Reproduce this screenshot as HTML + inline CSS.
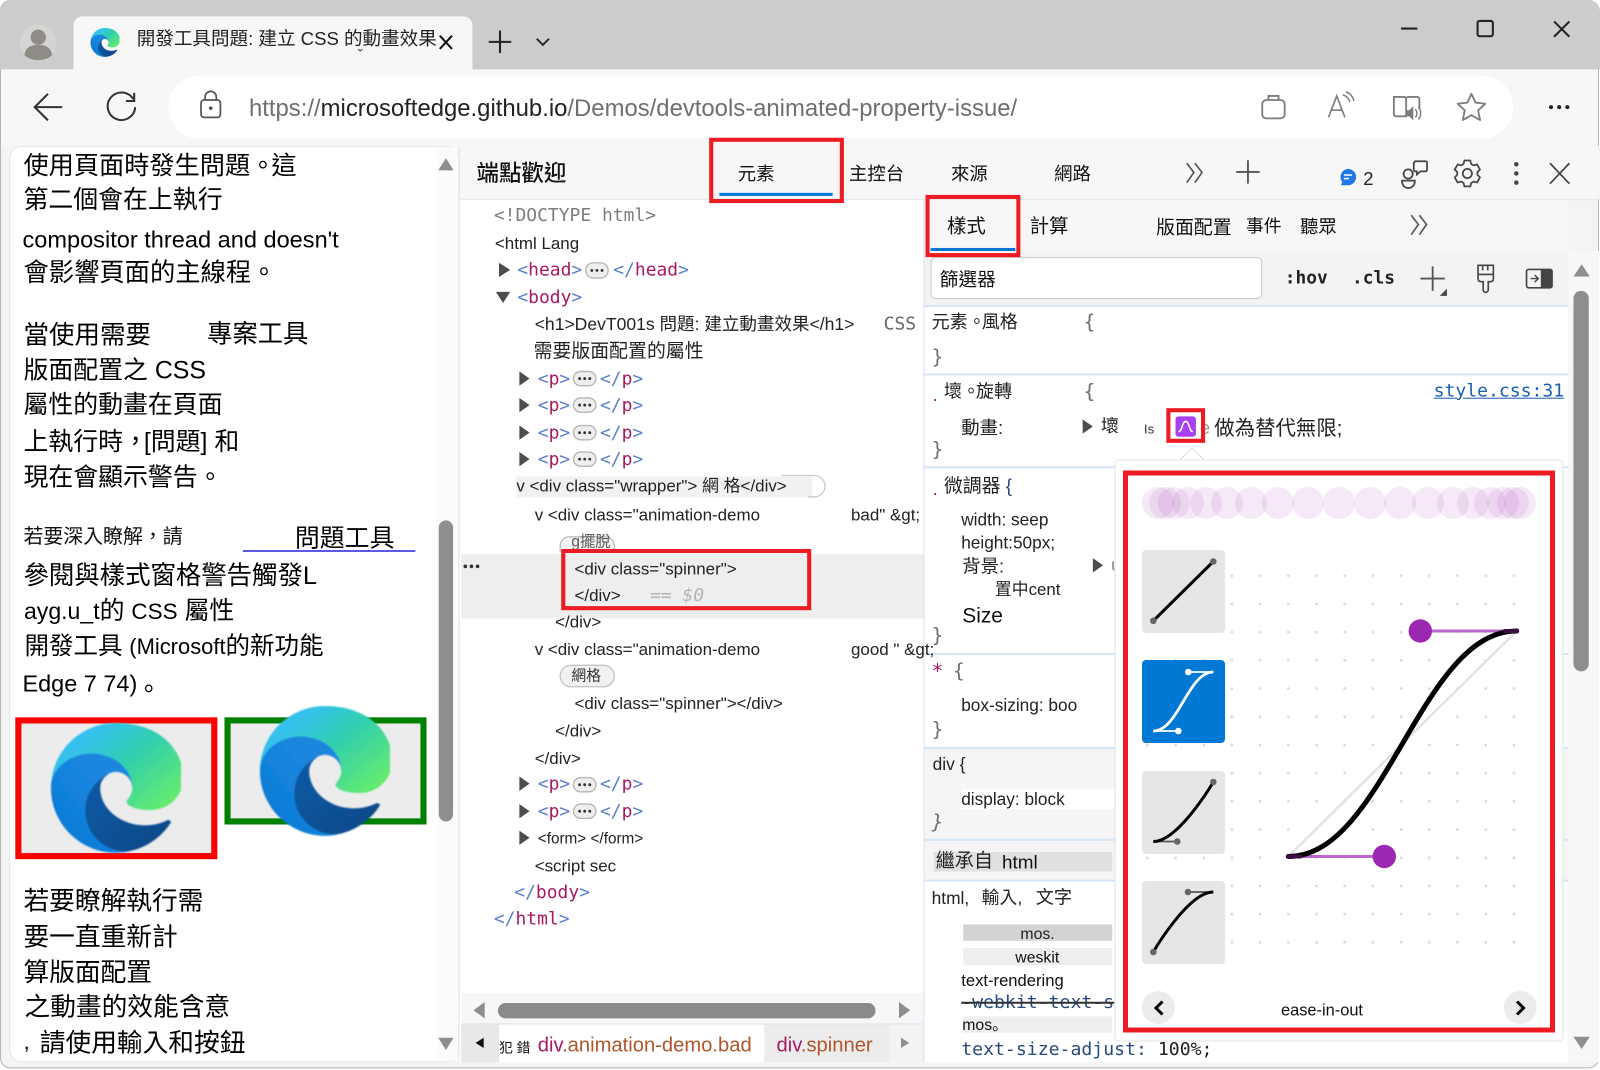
<!DOCTYPE html>
<html lang="zh-Hant">
<head>
<meta charset="utf-8">
<title>開發工具問題</title>
<style>
html,body{margin:0;padding:0;width:1600px;height:1070px;overflow:hidden;background:#fff}
#w{position:absolute;left:0;top:0;width:1568px;height:1049px;transform:scale(1.020408);transform-origin:0 0;font-family:"Liberation Sans","Noto Sans CJK TC",sans-serif;color:#000;overflow:hidden}
.b{position:absolute}
.t{position:absolute;white-space:pre;line-height:1;transform:translateY(calc(-50% + 1.2px));font-size:16.5px;color:#111}
.m{font-family:"DejaVu Sans Mono","Liberation Mono","Noto Sans CJK TC",monospace;font-size:17.6px;transform:translateY(calc(-50% + 1.6px))}
.p{font-size:24.4px;color:#000;transform:translateY(calc(-50% + 2px))}
.r{position:absolute;border:4.6px solid #ed1c24;box-sizing:border-box;z-index:5}
.g{color:#7d7d7d}.tag{color:#a8195f}.br{color:#5a7fd0}
.br2{color:#6d6d6d}
.d{font-size:16.6px;color:#222}
.j{font-family:"Liberation Sans","Noto Sans CJK SC",sans-serif;font-style:normal}
.n{margin-right:-4px}
#o{position:absolute;left:0;top:0;z-index:9}
</style>
</head>
<body>
<div id="w">
<!-- window background -->
<div class="b" style="left:0;top:0;width:1567px;height:1047px;background:#f4f4f4;border:1px solid #b5b5b5;border-radius:10px;box-sizing:border-box"></div>
<div class="b" style="left:0;top:0;width:1568px;height:68px;background:#cccccc;border-radius:11px 11px 0 0"></div>
<div class="b" style="left:72px;top:16px;width:391px;height:53px;background:#f7f7f7;border-radius:9px 9px 0 0"></div>
<div class="b" style="left:1px;top:68px;width:1565px;height:76px;background:#f7f7f7"></div>
<div class="b" style="left:165px;top:74px;width:1318px;height:62px;background:#fff;border-radius:31px"></div>

<!-- page panel -->
<div class="b" style="left:9px;top:143px;width:441px;height:898px;background:#fff;border-radius:12px;border:1px solid #e6e6e6;box-sizing:border-box"></div>
<div class="b" style="left:428px;top:144px;width:20px;height:895px;background:#fbfbfb"></div>
<div class="b" style="left:430px;top:510px;width:14px;height:295px;background:#8e8e8e;border-radius:7px"></div>

<!-- devtools -->
<div class="b" style="left:451px;top:143px;width:1116px;height:52px;background:#f7f7f7;box-shadow:0 1px 2px #ddd"></div>
<div class="b" style="left:451px;top:196px;width:454px;height:845px;background:#fff"></div>
<div class="b" style="left:452px;top:543px;width:453px;height:63px;background:#eeeeee"></div>
<div class="b" style="left:506px;top:467px;width:290px;height:20px;background:#f1f1f1"></div>
<div class="b" style="left:452px;top:973px;width:453px;height:30px;background:#f7f7f7"></div>
<div class="b" style="left:488px;top:983px;width:370px;height:15px;background:#8a8a8a;border-radius:8px"></div>
<div class="b" style="left:452px;top:1003px;width:453px;height:38px;background:#f3f3f3;border-top:1px solid #d6e3f3;box-sizing:border-box"></div>
<div class="b" style="left:452px;top:1004px;width:37px;height:37px;background:#e8e8e8"></div>
<div class="b" style="left:489px;top:1004px;width:260px;height:37px;background:#fff"></div>
<div class="b" style="left:749px;top:1004px;width:123px;height:37px;background:#ececec"></div>

<!-- styles pane -->
<div class="b" style="left:905px;top:196px;width:632px;height:845px;background:#fff;border-left:1px solid #d6e3f3;box-sizing:border-box"></div>
<div class="b" style="left:906px;top:196px;width:631px;height:52px;background:#f7f7f7"></div>
<div class="b" style="left:906px;top:248px;width:631px;height:51px;background:#f3f3f3"></div>
<div class="b" style="left:912px;top:252px;width:325px;height:41px;background:#fff;border:1px solid #c8c8c8;border-radius:5px;box-sizing:border-box"></div>
<div class="b" style="left:1537px;top:246px;width:30px;height:795px;background:#f7f7f7"></div>
<div class="b" style="left:1542px;top:285px;width:15px;height:373px;background:#8e8e8e;border-radius:8px"></div>
<div class="b" style="left:906px;top:299px;width:631px;height:2px;background:#d6e4f7"></div>
<div class="b" style="left:906px;top:366px;width:631px;height:2px;background:#d6e4f7"></div>
<div class="b" style="left:906px;top:457px;width:631px;height:2px;background:#d6e4f7"></div>
<div class="b" style="left:906px;top:640px;width:631px;height:2px;background:#d6e4f7"></div>
<div class="b" style="left:906px;top:732px;width:631px;height:90px;background:#f5f5f5;border-top:2px solid #d6e4f7;box-sizing:border-box"></div>
<div class="b" style="left:942px;top:773px;width:195px;height:20px;background:#fff"></div>
<div class="b" style="left:906px;top:822px;width:631px;height:42px;background:#f5f5f5;border-top:2px solid #d6e4f7;border-bottom:2px solid #d6e4f7;box-sizing:border-box"></div>
<div class="b" style="left:915px;top:835px;width:175px;height:19px;background:#e0e0e0"></div>
<div class="b" style="left:944px;top:906px;width:146px;height:16px;background:#d3d3d3"></div>
<div class="b" style="left:944px;top:929px;width:146px;height:17px;background:#eeeeee"></div>
<div class="b" style="left:944px;top:996px;width:146px;height:16px;background:#eeeeee"></div>

<!-- shapes -->
<svg class="b" style="left:0;top:0" width="1568" height="1049" viewBox="0 0 1568 1049" fill="none">
<!-- avatar -->
<circle cx="37.5" cy="42" r="18" fill="#d4d4d2"/>
<circle cx="37.5" cy="36.5" r="7.5" fill="#8f8c88"/>
<path d="M24 54c1-8 7-10 13.500-10s12.500 2 13.500 10c-3 3-8 5-13.500 5s-10.500-2-13.500-5z" fill="#8f8c88"/>
<!-- tab icons -->
<path d="M431 35l12 13M443 35l-12 13" stroke="#111" stroke-width="2"/>
<path d="M490 30v22M479 41h22" stroke="#222" stroke-width="2"/>
<path d="M526 38l6 6 6-6" stroke="#222" stroke-width="1.800"/>
<path d="M351 48l2 2 2-2" stroke="#444" stroke-width="1"/>
<!-- window controls -->
<path d="M1373 28h16" stroke="#222" stroke-width="2"/>
<rect x="1448" y="20.500" width="15" height="15" rx="2" stroke="#222" stroke-width="2"/>
<path d="M1523 21l15 15M1538 21l-15 15" stroke="#222" stroke-width="2"/>
<!-- toolbar -->
<path d="M61 105H35M47 92l-13 13 13 13" stroke="#333" stroke-width="2"/>
<path d="M130.500 97a13.500 13.500 0 1 0 2 8" stroke="#333" stroke-width="2"/>
<path d="M131.500 91v8h-8" stroke="#333" stroke-width="2"/>
<rect x="197" y="98" width="19" height="17" rx="3" stroke="#555" stroke-width="1.700"/>
<path d="M201 98v-3a5.500 5.500 0 0 1 11 0v3" stroke="#555" stroke-width="1.700"/>
<circle cx="206.500" cy="106" r="1.800" fill="#555"/>
<rect x="1237" y="98" width="22" height="18" rx="4" stroke="#7d7d7d" stroke-width="1.800"/>
<path d="M1243 98v-4h10v4" stroke="#7d7d7d" stroke-width="1.800"/>
<path d="M1302 115l8-21 8 21M1305 108h10" stroke="#7d7d7d" stroke-width="1.600"/>
<path d="M1316 93c4 1 6 4 7 7M1319 90c4 1 7 5 8 9" stroke="#7d7d7d" stroke-width="1.500"/>
<path d="M1366 95h10c1 0 2 1 2 2v17h-10c-1 0-2-1-2-2zM1378 97c0-1 1-2 2-2h9c1 0 2 1 2 2v10" stroke="#7d7d7d" stroke-width="1.800"/>
<path d="M1378 108h3l4-4v14l-4-4h-3z" fill="#7d7d7d"/>
<path d="M1387 107c2 2 2 6 0 8M1390 105c3 3 3 9 0 12" stroke="#7d7d7d" stroke-width="1.400"/>
<path d="M1442 92l4 8.500 9.500 1.200-7 6.500 2 9.500-8.500-4.800-8.500 4.800 2-9.500-7-6.500 9.500-1.200z" stroke="#7d7d7d" stroke-width="1.800" stroke-linejoin="round"/>
<g fill="#222"><circle cx="1520" cy="105" r="2"/><circle cx="1528" cy="105" r="2"/><circle cx="1536" cy="105" r="2"/></g>
<!-- devtools header icons -->
<path d="M1163 160l7 9-7 10M1171 160l7 9-7 10" stroke="#555" stroke-width="1.600"/>
<path d="M1223 157v23M1211.500 168.500h23" stroke="#555" stroke-width="1.800"/>
<path d="M1321 165.500a8 8 0 0 1 0 16h-7l1.500-3a8 8 0 0 1 5.500-13z" fill="#1e78e8"/>
<path d="M1317 171.500h8M1317 175h5" stroke="#fff" stroke-width="1.500"/>
<circle cx="1380" cy="170.500" r="4.500" stroke="#444" stroke-width="1.700"/>
<path d="M1374 177h12.500v1a6 6 0 0 1-12.500 0z" stroke="#444" stroke-width="1.700"/>
<path d="M1387 158h10a1.500 1.500 0 0 1 1.500 1.500v7a1.500 1.500 0 0 1-1.500 1.500h-5l-3.500 3v-3h-1.500a1.500 1.500 0 0 1-1.500-1.500v-7z" stroke="#444" stroke-width="1.700"/>
<g transform="translate(1438 170)" stroke="#444" stroke-width="1.700" stroke-linejoin="round"><path d="M-2.900-12.700L2.900-12.700L3.700-9.300L6.200-7.900L9.500-8.900L12.400-3.800L9.900-1.400L9.900 1.400L12.400 3.800L9.500 8.900L6.200 7.900L3.700 9.300L2.900 12.700L-2.900 12.700L-3.700 9.300L-6.200 7.900L-9.500 8.900L-12.400 3.800L-9.900 1.400L-9.900-1.400L-12.400-3.800L-9.500-8.900L-6.200-7.900L-3.700-9.300z"/><circle r="4.500"/></g>
<g fill="#444"><circle cx="1486" cy="161" r="2.200"/><circle cx="1486" cy="170" r="2.200"/><circle cx="1486" cy="179" r="2.200"/></g>
<path d="M1519 160l19 20M1538 160l-19 20" stroke="#444" stroke-width="1.700"/>
<path d="M1383 211l7 9-7 10M1391 211l7 9-7 10" stroke="#555" stroke-width="1.600"/>
<!-- filter toolbar -->
<path d="M1404 261v24M1392 273h24" stroke="#555" stroke-width="1.800"/>
<path d="M1418 283v7h-7z" fill="#444"/>
<path d="M1448.500 260h15v13c0 2-1 3-3 3h-2v8a2 2 0 0 1-5 0v-8h-2c-2 0-3-1-3-3zM1448.500 269h15M1453 260v5M1458 260v5" stroke="#444" stroke-width="1.600"/>
<rect x="1496" y="264" width="25" height="18" rx="2" stroke="#444" stroke-width="1.600"/>
<rect x="1510" y="264" width="11" height="18" fill="#444"/>
<path d="M1500 273h7M1504 269.500l3.500 3.500-3.500 3.500" stroke="#444" stroke-width="1.400"/>
<!-- scroll arrows -->
<path d="M437 155l7.500 12h-15z" fill="#8e8e8e"/>
<path d="M429.500 1017h15l-7.500 12z" fill="#8e8e8e"/>
<path d="M1550 259l8 12h-16z" fill="#8e8e8e"/>
<path d="M1542 1016h16l-8 12z" fill="#8e8e8e"/>
<path d="M475 982v16l-11-8z" fill="#8e8e8e"/>
<path d="M881 982v16l11-8z" fill="#8e8e8e"/>
<path d="M474 1017l-8 5 8 5z" fill="#111"/>
<path d="M883 1017l8 5-8 5z" fill="#8e8e8e"/>
<!-- elements triangles -->
<g fill="#4d4d4d">
<path d="M489 257.500l11 7-11 7z"/><path d="M486 286h14l-7 11z"/>
<path d="M509 364l10 7-10 7z"/><path d="M509 390l10 7-10 7z"/><path d="M509 417l10 7-10 7z"/><path d="M509 443l10 7-10 7z"/>
<path d="M509 761l10 7-10 7z"/><path d="M509 788l10 7-10 7z"/><path d="M509 814l10 7-10 7z"/>
<path d="M1061 411l10 7-10 7z"/><path d="M1071 547l10 7-10 7z"/>
</g>
<!-- pills -->
<g fill="#eeeeee" stroke="#b5b5b5" stroke-width="1.300">
<rect x="574" y="257.500" width="22" height="15" rx="7.500"/>
<rect x="562" y="364" width="22" height="14" rx="7"/>
<rect x="562" y="390" width="22" height="14" rx="7"/>
<rect x="562" y="417" width="22" height="14" rx="7"/>
<rect x="562" y="443" width="22" height="14" rx="7"/>
<rect x="562" y="762" width="22" height="14" rx="7"/>
<rect x="562" y="788" width="22" height="14" rx="7"/>
</g>
<g fill="#333">
<circle cx="580" cy="265" r="1.400"/><circle cx="585" cy="265" r="1.400"/><circle cx="590" cy="265" r="1.400"/>
<circle cx="568" cy="371" r="1.400"/><circle cx="573" cy="371" r="1.400"/><circle cx="578" cy="371" r="1.400"/>
<circle cx="568" cy="397" r="1.400"/><circle cx="573" cy="397" r="1.400"/><circle cx="578" cy="397" r="1.400"/>
<circle cx="568" cy="424" r="1.400"/><circle cx="573" cy="424" r="1.400"/><circle cx="578" cy="424" r="1.400"/>
<circle cx="568" cy="450" r="1.400"/><circle cx="573" cy="450" r="1.400"/><circle cx="578" cy="450" r="1.400"/>
<circle cx="568" cy="769" r="1.400"/><circle cx="573" cy="769" r="1.400"/><circle cx="578" cy="769" r="1.400"/>
<circle cx="568" cy="795" r="1.400"/><circle cx="573" cy="795" r="1.400"/><circle cx="578" cy="795" r="1.400"/>
<circle cx="456" cy="555" r="1.800"/><circle cx="462" cy="555" r="1.800"/><circle cx="468" cy="555" r="1.800"/>
</g>
<path d="M766 466h32a10.500 10.500 0 0 1 0 21h-6" stroke="#c9c9c9" stroke-width="1.300"/>
<path d="M549 541v-6a9 9 0 0 1 9-9h35a9 9 0 0 1 9 9v6" fill="#f3f3f3" stroke="#bdbdbd" stroke-width="1.300"/>
<rect x="549" y="652" width="53" height="21" rx="10.500" fill="#f1f1f1" stroke="#c4c4c4" stroke-width="1.300"/>
<!-- animation swatch -->
<rect x="1152" y="408" width="20" height="20" rx="3" fill="#a83ff0"/>
<path d="M1155 423c4 0 3-10 7-10s3 10 7 10" stroke="#fff" stroke-width="1.500"/>
<path d="M238 540h169" stroke="#2222dd" stroke-width="1.500"/>
</svg>

<!-- page images boxes -->
<div class="b" style="left:15px;top:703px;width:198px;height:139px;background:#ececec;border:6.5px solid #f00;box-sizing:border-box"></div>
<div class="b" style="left:220px;top:703px;width:198px;height:105px;background:#ececec;border:6.500px solid #008000;box-sizing:border-box"></div>

<!-- page text -->
<span class="t p" style="left:23px;top:162px;font-size:24.7px">使用頁面時發生問題<i class="j n">。</i>這</span>
<span class="t p" style="left:23px;top:195px">第二個會在上執行</span>
<span class="t p" style="left:22px;top:233px;font-size:23.1px">compositor thread and doesn't</span>
<span class="t p" style="left:23px;top:267px;font-size:24.8px">會影響頁面的主線程<i class="j">。</i></span>
<span class="t p" style="left:23px;top:327px;font-size:25px">當使用需要</span>
<span class="t p" style="left:203px;top:327px;font-size:24.8px">專案工具</span>
<span class="t p" style="left:23px;top:362px">版面配置之 CSS</span>
<span class="t p" style="left:23px;top:396px">屬性的動畫在頁面</span>
<span class="t p" style="left:23px;top:432px">上執行時<i class="j n">，</i>[問題] 和</span>
<span class="t p" style="left:23px;top:467px">現在會顯示警告<i class="j">。</i></span>
<span class="t" style="left:23px;top:525px;font-size:19.500px;transform:translateY(calc(-50% + 2px))">若要深入瞭解<i class="j">，</i>請</span>
<span class="t p" style="left:289px;top:527px">問題工具</span>
<span class="t p" style="left:23px;top:563px;font-size:24.9px">參閱與樣式窗格警告觸發L</span>
<span class="t p" style="left:23.5px;top:598px"><span style="font-size:22.6px">ayg.u_t</span>的 <span style="font-size:22px">CSS</span> 屬性</span>
<span class="t p" style="left:24px;top:632px;font-size:24px">開發工具 <span style="font-size:21.5px">(Microsoft</span>的新功能</span>
<span class="t p" style="left:22px;top:668px;font-size:23px">Edge 7 74)</span>
<span class="t p j" style="left:141px;top:668px">。</span>
<span class="t p" style="left:23px;top:882px;font-size:25.2px">若要瞭解執行需</span>
<span class="t p" style="left:23px;top:917px;font-size:25.2px">要一直重新計</span>
<span class="t p" style="left:23px;top:952px;font-size:25.2px">算版面配置</span>
<span class="t p" style="left:24px;top:986px;font-size:25.2px">之動畫的效能含意</span>
<span class="t p" style="left:23px;top:1019px;font-size:22px">,</span>
<span class="t p" style="left:39px;top:1021px;font-size:25.2px">請使用輸入和按鈕</span>

<!-- chrome text -->
<span class="t" style="left:134px;top:37px;font-size:18.2px;color:#222">開發工具問題: 建立 CSS 的動畫效果</span>
<span class="t" style="left:244px;top:105px;font-size:23.4px;color:#6f6f6f">https://<span style="color:#222">microsoftedge.github.io</span>/Demos/devtools-animated-property-issue/</span>

<!-- devtools tabs -->
<span class="t" style="left:467px;top:169px;font-size:22px;font-weight:500;color:#111">端點歡迎</span>
<span class="t" style="left:723px;top:169px;font-size:18px;color:#111">元素</span>
<span class="t" style="left:832px;top:169px;font-size:18px;color:#111">主控台</span>
<span class="t" style="left:932px;top:169px;font-size:18px;color:#111">來源</span>
<span class="t" style="left:1033px;top:169px;font-size:18px;color:#111">網路</span>
<span class="t" style="left:1336px;top:174px;font-size:18px;color:#222">2</span>
<div class="b" style="left:705px;top:189px;width:111px;height:3px;background:#0078d4"></div>
<div class="r" style="left:695px;top:135px;width:132px;height:64px"></div>
<span class="t" style="left:928px;top:221px;font-size:19px;color:#111">樣式</span>
<span class="t" style="left:1009px;top:221px;font-size:19px;color:#111">計算</span>
<span class="t" style="left:1133px;top:222px;font-size:18.500px;color:#111">版面配置</span>
<span class="t" style="left:1221px;top:221px;font-size:17.500px;color:#111">事件</span>
<span class="t" style="left:1274px;top:221px;font-size:18px;color:#111">聽眾</span>
<div class="b" style="left:912px;top:243px;width:83px;height:3px;background:#0078d4"></div>
<div class="r" style="left:907px;top:191px;width:93px;height:61px"></div>
<span class="t" style="left:921px;top:273px;font-size:18.300px;color:#111">篩選器</span>
<span class="t m" style="left:1259px;top:272px;font-size:17.500px;font-weight:bold;color:#222">:hov</span>
<span class="t m" style="left:1325px;top:272px;font-size:17.500px;font-weight:bold;color:#222">.cls</span>

<!-- elements -->
<span class="t m g" style="left:484px;top:211px">&lt;!DOCTYPE html&gt;</span>
<span class="t d" style="left:485px;top:238px">&lt;html Lang</span>
<span class="t m" style="left:507px;top:264px"><span class="br">&lt;</span><span class="tag">head</span><span class="br">&gt;</span></span>
<span class="t m" style="left:601px;top:264px"><span class="br">&lt;/</span><span class="tag">head</span><span class="br">&gt;</span></span>
<span class="t m" style="left:507px;top:291px"><span class="br">&lt;</span><span class="tag">body</span><span class="br">&gt;</span></span>
<span class="t d" style="left:524px;top:317px;font-size:17.2px">&lt;h1&gt;DevT001s 問題: 建立動畫效果&lt;/h1&gt;</span>
<span class="t m" style="left:866px;top:317px;color:#666">CSS</span>
<span class="t" style="left:523px;top:343px;font-size:18.500px;color:#222">需要版面配置的屬性</span>
<span class="t m" style="left:527px;top:371px"><span class="br">&lt;</span><span class="tag">p</span><span class="br">&gt;</span></span><span class="t m" style="left:588px;top:371px"><span class="br">&lt;/</span><span class="tag">p</span><span class="br">&gt;</span></span>
<span class="t m" style="left:527px;top:397px"><span class="br">&lt;</span><span class="tag">p</span><span class="br">&gt;</span></span><span class="t m" style="left:588px;top:397px"><span class="br">&lt;/</span><span class="tag">p</span><span class="br">&gt;</span></span>
<span class="t m" style="left:527px;top:424px"><span class="br">&lt;</span><span class="tag">p</span><span class="br">&gt;</span></span><span class="t m" style="left:588px;top:424px"><span class="br">&lt;/</span><span class="tag">p</span><span class="br">&gt;</span></span>
<span class="t m" style="left:527px;top:450px"><span class="br">&lt;</span><span class="tag">p</span><span class="br">&gt;</span></span><span class="t m" style="left:588px;top:450px"><span class="br">&lt;/</span><span class="tag">p</span><span class="br">&gt;</span></span>
<span class="t d" style="left:506px;top:476px">v &lt;div class="wrapper"&gt; 網 格&lt;/div&gt;</span>
<span class="t d" style="left:524px;top:504px">v &lt;div class="animation-demo</span>
<span class="t d" style="left:834px;top:504px">bad" &amp;gt;</span>
<span class="t" style="left:560px;top:530px;font-size:15px;color:#555">g擺脫</span>
<span class="t d" style="left:563px;top:557px">&lt;div class="spinner"&gt;</span>
<span class="t d" style="left:563px;top:583px">&lt;/div&gt;</span>
<span class="t m" style="left:637px;top:583px;font-style:italic;color:#b3b3b3">== $0</span>
<div class="r" style="left:550px;top:538px;width:245px;height:60px"></div>
<span class="t d" style="left:544px;top:609px">&lt;/div&gt;</span>
<span class="t d" style="left:524px;top:636px">v &lt;div class="animation-demo</span>
<span class="t d" style="left:834px;top:636px">good " &amp;gt;</span>
<span class="t" style="left:560px;top:662px;font-size:14.500px;color:#333">網格</span>
<span class="t d" style="left:563px;top:689px">&lt;div class="spinner"&gt;&lt;/div&gt;</span>
<span class="t d" style="left:544px;top:716px">&lt;/div&gt;</span>
<span class="t d" style="left:524px;top:743px">&lt;/div&gt;</span>
<span class="t m" style="left:527px;top:768px"><span class="br">&lt;</span><span class="tag">p</span><span class="br">&gt;</span></span><span class="t m" style="left:588px;top:768px"><span class="br">&lt;/</span><span class="tag">p</span><span class="br">&gt;</span></span>
<span class="t m" style="left:527px;top:795px"><span class="br">&lt;</span><span class="tag">p</span><span class="br">&gt;</span></span><span class="t m" style="left:588px;top:795px"><span class="br">&lt;/</span><span class="tag">p</span><span class="br">&gt;</span></span>
<span class="t" style="left:527px;top:821px;font-size:15px;color:#222">&lt;form&gt; &lt;/form&gt;</span>
<span class="t d" style="left:524px;top:848px">&lt;script sec</span>
<span class="t m" style="left:504px;top:874px"><span class="br">&lt;/</span><span class="tag">body</span><span class="br">&gt;</span></span>
<span class="t m" style="left:484px;top:900px"><span class="br">&lt;/</span><span class="tag">html</span><span class="br">&gt;</span></span>
<span class="t" style="left:489px;top:1026px;font-size:13.500px;color:#111">犯 錯</span>
<span class="t" style="left:527px;top:1024px;font-size:19.8px"><span style="color:#a8195f">div</span><span style="color:#b0562a">.animation-demo.bad</span></span>
<span class="t" style="left:761px;top:1024px;font-size:19.8px"><span style="color:#a8195f">div</span><span style="color:#b0562a">.spinner</span></span>

<!-- styles -->
<span class="t" style="left:913px;top:315px;font-size:17.7px;color:#222">元素<i class="j n">。</i>風格</span>
<span class="t m br2" style="left:1062px;top:315px;font-size:19px">{</span>
<span class="t m br2" style="left:913px;top:349px;font-size:19px">}</span>
<span class="t" style="left:914px;top:386px;font-size:18px;color:#a8195f">.</span>
<span class="t" style="left:925px;top:383px;font-size:17.7px;color:#222">壞<i class="j n">。</i>旋轉</span>
<span class="t m br2" style="left:1062px;top:383px;font-size:19px">{</span>
<span class="t m" style="left:1405px;top:383px;font-size:17.7px;color:#1a5fb4;text-decoration:underline">style.css:31</span>
<span class="t" style="left:942px;top:418px;font-size:18px;color:#222">動畫:</span>
<span class="t" style="left:1079px;top:417px;font-size:17.500px;color:#222">壞</span>
<span class="t" style="left:1121px;top:419px;font-size:13px;color:#333">Is</span>
<span class="t" style="left:1176px;top:418px;font-size:18px;color:#999">e</span>
<span class="t" style="left:1190px;top:419px;font-size:20px;color:#222">做為替代無限;</span>
<div class="r" style="left:1143px;top:400px;width:38px;height:34px"></div>
<span class="t m br2" style="left:913px;top:440px;font-size:19px">}</span>
<span class="t" style="left:914px;top:478px;font-size:18px;color:#a8195f">.</span>
<span class="t" style="left:925px;top:475px;font-size:18.5px;color:#222">微調器<span style="color:#27497d"> {</span></span>
<span class="t" style="left:942px;top:509px;font-size:16.900px;color:#222">width: seep</span>
<span class="t" style="left:942px;top:532px;font-size:16.900px;color:#222">height:50px;</span>
<span class="t" style="left:943px;top:554px;font-size:18px;color:#222">背景:</span>
<span class="t" style="left:1089px;top:554px;font-size:16px;color:#777">u</span>
<span class="t" style="left:975px;top:577px;font-size:16.500px;color:#222">置中cent</span>
<span class="t" style="left:943px;top:603px;font-size:20.500px;color:#111">Size</span>
<span class="t m br2" style="left:913px;top:622px;font-size:19px">}</span>
<span class="t m" style="left:913px;top:657px;font-size:19px;color:#a8195f">*</span>
<span class="t m br2" style="left:934px;top:657px;font-size:19px">{</span>
<span class="t" style="left:942px;top:691px;font-size:16.900px;color:#222">box-sizing: boo</span>
<span class="t m br2" style="left:913px;top:714px;font-size:19px">}</span>
<span class="t" style="left:914px;top:748px;font-size:17px;color:#222">div {</span>
<span class="t" style="left:942px;top:783px;font-size:16.900px;color:#222">display: block</span>
<span class="t m br2" style="left:913px;top:805px;font-size:19px;font-style:italic">}</span>
<span class="t" style="left:917px;top:843px;font-size:18.700px;color:#222">繼承自</span>
<span class="t" style="left:982px;top:844px;font-size:18.500px;color:#111">html</span>
<span class="t" style="left:913px;top:879px;font-size:17px;color:#222">html,</span>
<span class="t" style="left:962px;top:879px;font-size:17.500px;color:#222">輸入,</span>
<span class="t" style="left:1015px;top:879px;font-size:17.800px;color:#222">文字</span>
<span class="t" style="left:1000px;top:915px;font-size:15.500px;color:#222">mos.</span>
<span class="t" style="left:995px;top:938px;font-size:15.500px;color:#111">weskit</span>
<span class="t" style="left:942px;top:960px;font-size:16.300px;color:#111">text-rendering</span>
<span class="t m" style="left:942px;top:981px;font-size:17.800px;color:#27497d;text-decoration:line-through;text-decoration-color:#333;text-decoration-thickness:2px">-webkit-text-s</span>
<span class="t" style="left:943px;top:1004px;font-size:15.500px;color:#111">mos<i class="j">。</i></span>
<span class="t m" style="left:942px;top:1027px;font-size:17.800px;color:#27497d">text-size-adjust: <span style="color:#222">100%;</span></span>
</div>

<!-- overlay in real pixel coordinates -->
<svg id="o" width="1600" height="1070" viewBox="0 0 1600 1070" fill="none" font-family="'Liberation Sans',sans-serif">
<defs>
<filter id="bl" x="-5%" y="-5%" width="110%" height="110%"><feGaussianBlur stdDeviation="0.7"/></filter>
<linearGradient id="g1" x1="0.1" y1="0.1" x2="0.9" y2="0.8"><stop offset="0" stop-color="#0c59a4"/><stop offset="1" stop-color="#114a8b"/></linearGradient>
<linearGradient id="g2" x1="0.6" y1="0.4" x2="0.1" y2="0.9"><stop offset="0" stop-color="#1b86df"/><stop offset=".5" stop-color="#1080da"/><stop offset="1" stop-color="#0078d4"/></linearGradient>
<linearGradient id="g3" x1="0" y1="0" x2="1" y2="0.8"><stop offset="0" stop-color="#35c1f1"/><stop offset=".25" stop-color="#34c1ed"/><stop offset=".55" stop-color="#2fcfb0"/><stop offset="1" stop-color="#66eb6e"/></linearGradient>
<symbol id="edge" viewBox="0 0 256 256">
<path fill="url(#g1)" d="M231.1 190.500c-3.400 1.800-6.900 3.400-10.500 4.700-11.400 4.300-23.500 6.400-35.700 6.400-47 0-88-32.300-88-73.800 0-11.700 6.800-21.800 16.400-27.200-42.500 1.800-53.400 46-53.400 71.900 0 73.200 67.500 80.600 82 80.600 7.800 0 19.600-2.300 26.700-4.500l1.300-.4c27.400-9.500 50.700-27.900 66.100-52.300 1.200-1.900-.9-4.100-2.900-3.100z"/>
<path fill="url(#g2)" d="M105.700 241.400c-8.800-5.500-16.500-12.600-22.600-21-26.300-36.100-18.400-86.700 17.700-113 3.800-2.700 7.700-5.200 11.900-7.200 3.100-1.500 8.400-4.100 15.400-4 10 .1 19.400 4.800 25.400 12.900 4 5.300 6.200 11.700 6.300 18.400 0-.2 24.500-79.700-80-79.700-43.900 0-80 41.600-80 78.200-.2 19.300 4 38.500 12.100 56 27.600 58.800 94.800 87.600 156.400 67.100-21.100 6.600-44 3.700-62.600-8.100z"/>
<path fill="url(#g3)" d="M152.300 148.900c-.8 1.100-3.400 2.600-3.400 5.900 0 2.700 1.800 5.300 4.900 7.500 15.100 10.500 43.500 9.100 43.600 9.100 11.200 0 22.100-3 31.700-8.700 19.600-11.400 31.600-32.400 31.600-55.100.3-23.500-8.400-39.100-11.900-46C226.600 19.100 178.900 0 128 0 58 0 1 56.200 0 126.200c.5-36.600 36.900-66.200 80-66.200 3.500 0 23.500.3 42 10.100 16.300 8.600 24.900 18.900 30.800 29.200 6.200 10.700 7.300 24.100 7.300 29.500 0 5.300-2.700 13.200-7.800 20z"/>
</symbol>
</defs>
<!-- edge logos -->
<use href="#edge" x="90.500" y="28" width="29" height="29"/>
<use href="#edge" x="51" y="723" width="130" height="130" filter="url(#bl)"/>
<use href="#edge" x="260" y="706" width="130" height="130" filter="url(#bl)"/>

<!-- popover card -->
<path d="M1180 460l12-12 12 12" fill="#fff" stroke="#ddd" stroke-width="1"/>
<rect x="1115" y="460" width="448" height="581" rx="4" fill="#fff" stroke="#e2e2e2" stroke-width="1"/>
<rect x="1125.500" y="473" width="427" height="557" stroke="#ed1c24" stroke-width="5" fill="#fff"/>

<!-- preview dots -->
<g fill="#9c27b0" fill-opacity=".1">
<circle cx="1158" cy="503" r="16"/><circle cx="1165" cy="503" r="16"/><circle cx="1174" cy="503" r="16"/><circle cx="1188" cy="503" r="16"/><circle cx="1206" cy="503" r="16"/><circle cx="1227" cy="503" r="16"/><circle cx="1251" cy="503" r="16"/><circle cx="1278" cy="503" r="16"/><circle cx="1308" cy="503" r="16"/><circle cx="1339" cy="503" r="16"/><circle cx="1370" cy="503" r="16"/><circle cx="1400" cy="503" r="16"/><circle cx="1428" cy="503" r="16"/><circle cx="1453" cy="503" r="16"/><circle cx="1473" cy="503" r="16"/><circle cx="1490" cy="503" r="16"/><circle cx="1503" cy="503" r="16"/><circle cx="1513" cy="503" r="16"/><circle cx="1520" cy="503" r="16"/>
</g>

<!-- grid dots -->
<defs><pattern id="dots" x="1147.300" y="575.700" width="28.200" height="28.200" patternUnits="userSpaceOnUse"><circle cx="0" cy="0" r="1.400" fill="#d9d9d9"/><circle cx="28.200" cy="0" r="1.400" fill="#d9d9d9"/><circle cx="0" cy="28.200" r="1.400" fill="#d9d9d9"/><circle cx="28.200" cy="28.200" r="1.400" fill="#d9d9d9"/></pattern></defs>
<rect x="1146" y="574" width="370" height="370" fill="url(#dots)"/>

<!-- preset tiles -->
<rect x="1142" y="550" width="83" height="83" rx="4" fill="#e6e6e6"/>
<path d="M1153.300 620.800L1213.300 561.500" stroke="#000" stroke-width="3"/>
<circle cx="1153.300" cy="620.800" r="3.300" fill="#666"/><circle cx="1213.300" cy="561.500" r="3.300" fill="#666"/>
<rect x="1142" y="660" width="83" height="83" rx="4" fill="#0078d4"/>
<path d="M1153.300 731h25M1188.300 672h25" stroke="#fff" stroke-width="1.800"/>
<path d="M1153.300 731C1178.500 731 1188 672 1213.300 672" stroke="#fff" stroke-width="2.800"/>
<circle cx="1178.300" cy="731" r="3.300" fill="#fff"/><circle cx="1188.300" cy="672" r="3.300" fill="#fff"/>
<rect x="1142" y="771" width="83" height="83" rx="4" fill="#e6e6e6"/>
<path d="M1153.300 841.500h24" stroke="#555" stroke-width="1.800"/>
<path d="M1153.300 841.500C1178.500 841.500 1213.300 782 1213.300 782" stroke="#000" stroke-width="3"/>
<circle cx="1177.300" cy="841.500" r="3.300" fill="#666"/><circle cx="1213.300" cy="782" r="3.300" fill="#666"/>
<rect x="1142" y="881" width="83" height="83" rx="4" fill="#e6e6e6"/>
<path d="M1188 892h25" stroke="#555" stroke-width="1.800"/>
<path d="M1153.300 952C1153.300 952 1188 892 1213.300 892" stroke="#000" stroke-width="3"/>
<circle cx="1153.300" cy="952" r="3.300" fill="#666"/><circle cx="1188" cy="892" r="3.300" fill="#666"/>

<!-- main curve -->
<path d="M1288.300 856.500L1516.700 631" stroke="#e1e3e8" stroke-width="2.500"/>
<path d="M1288.300 856.500H1384.300M1420.300 631H1516.700" stroke="#bb66cc" stroke-width="3"/>
<path d="M1288.300 856.500C1384.300 856.500 1420.300 631 1516.700 631" stroke="#000" stroke-width="5" stroke-linecap="round"/>
<path d="M1288.300 856.500h12M1516.700 631h-12" stroke="#3d0b45" stroke-width="4" stroke-linecap="round"/>
<circle cx="1384.300" cy="856.500" r="11.700" fill="#9c27b0"/>
<circle cx="1420.300" cy="631" r="11.700" fill="#9c27b0"/>

<!-- nav -->
<circle cx="1158.300" cy="1007.500" r="16.500" fill="#ececec"/>
<circle cx="1520.300" cy="1007.500" r="16.500" fill="#ececec"/>
<path d="M1162.500 1001.500l-6.500 6.500 6.500 6.500" stroke="#000" stroke-width="3"/>
<path d="M1517 1001.500l6.500 6.500-6.500 6.500" stroke="#000" stroke-width="3"/>
<text x="1322" y="1015.500" text-anchor="middle" font-size="16.400" fill="#111">ease-in-out</text>
</svg>
</body>
</html>
